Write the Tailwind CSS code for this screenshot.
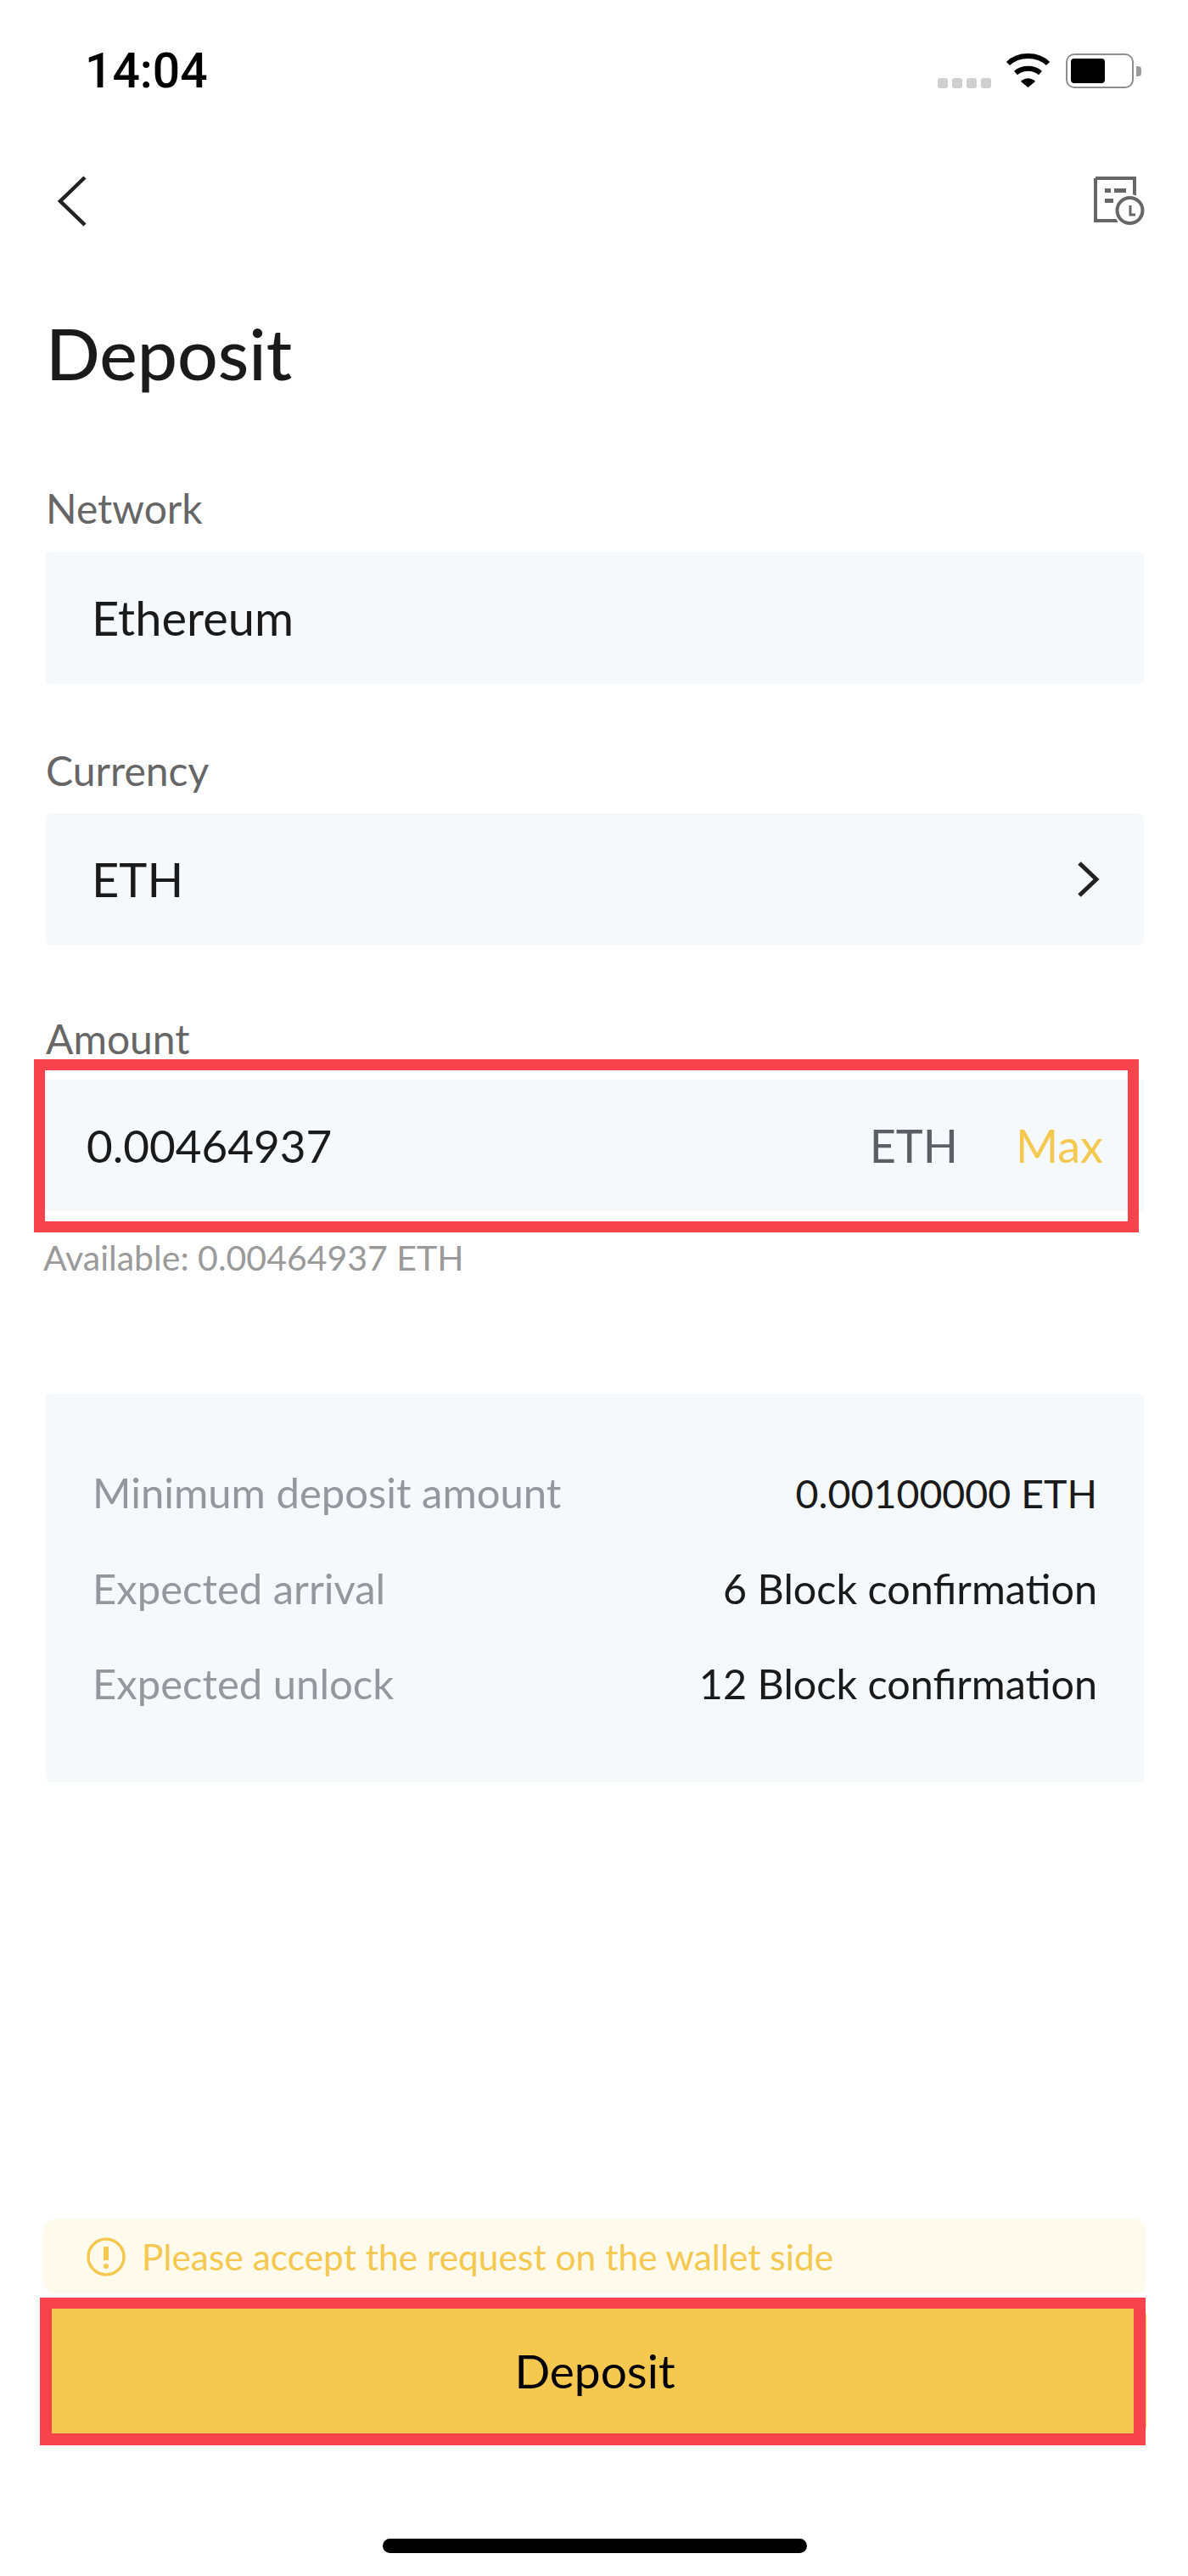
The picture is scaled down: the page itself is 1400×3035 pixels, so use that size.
<!DOCTYPE html>
<html lang="en">
<head>
  <meta charset="UTF-8" />
  <meta name="viewport" content="width=device-width, initial-scale=1" />
  <title>Deposit</title>
  <script src="https://cdn.jsdelivr.net/npm/@tailwindcss/browser@4"></script>
</head>
<body class="bg-white font-['Lato','Liberation_Sans',sans-serif] text-[#1a1a1a]">
  <div class="relative w-[1400px] h-[3035px] overflow-hidden flex flex-col">

    <!-- Status bar -->
    <div class="h-[192px] pl-[100px] pr-[55px] pt-[52px] flex justify-between items-start">
      <span class="font-['Roboto',sans-serif] font-medium text-[57px] leading-[64px] text-black">14:04</span>
      <div class="flex items-start pt-[11px]">
        <div class="flex gap-[5px] mt-[29px] mr-[17px]">
          <span class="w-[12px] h-[12px] rounded-[3px] bg-[#cfcfcf]"></span>
          <span class="w-[12px] h-[12px] rounded-[3px] bg-[#cfcfcf]"></span>
          <span class="w-[12px] h-[12px] rounded-[3px] bg-[#cfcfcf]"></span>
          <span class="w-[12px] h-[12px] rounded-[3px] bg-[#cfcfcf]"></span>
        </div>
        <svg class="w-[53px] h-[40px] mr-[18px]" viewBox="0 0 53 40" fill="none" stroke="black">
          <path d="M3 12 C15 0 38 0 50 12" stroke-width="6" />
          <path d="M12 23 C20 16 33 16 41 23" stroke-width="6" />
          <path d="M18 33 C23 28 30 28 35 33 L26.5 40 Z" fill="black" stroke="none" />
        </svg>
        <div class="w-[80px] h-[41px] rounded-[10px] border-[2px] border-[#8e8e8e] p-[4px]">
          <div class="w-[40px] h-full rounded-[4px] bg-black"></div>
        </div>
        <span class="w-[6px] h-[12px] mt-[15px] ml-[3px] rounded-r-[4px] bg-[#9a9a9a]"></span>
      </div>
    </div>

    <!-- Nav -->
    <div class="h-[90px] pl-[66px] pr-[51px] flex justify-between items-center">
      <svg class="w-[36px] h-[60px]" viewBox="0 0 36 60" fill="none" stroke="#222" stroke-width="4.5">
        <path d="M34 2 L5 30 L34 58" />
      </svg>
      <svg class="w-[60px] h-[60px]" viewBox="0 0 60 60" fill="none">
        <path d="M2 3 H48 V30 M2 3 V53 H28" stroke="#666" stroke-width="4" />
        <rect x="13" y="15" width="7" height="5" fill="#666" />
        <rect x="24" y="15" width="14" height="5" fill="#666" />
        <rect x="13" y="27" width="10" height="5" fill="#666" />
        <circle cx="42.5" cy="41" r="19" fill="white" />
        <circle cx="42.5" cy="41" r="15" stroke="#666" stroke-width="4" />
        <path d="M43 35 V46 H49" stroke="#666" stroke-width="3" />
      </svg>
    </div>

    <!-- Title -->
    <h1 class="mt-[84px] pl-[54px] text-[84px] leading-[100px] font-medium text-[#1a1a1a]">Deposit</h1>

    <!-- Form -->
    <div class="pl-[54px] pr-[52px] mt-[105px] flex flex-col">
      <label class="text-[48px] leading-[56px] text-[#666]">Network</label>
      <div class="mt-[23px] h-[156px] rounded-[6px] bg-[#f5f9fc] pl-[54px] flex items-center text-[56px]">Ethereum</div>

      <label class="mt-[74px] text-[48px] leading-[56px] text-[#666]">Currency</label>
      <div class="mt-[22px] h-[155px] rounded-[6px] bg-[#f5f9fc] pl-[54px] pr-[52px] flex items-center justify-between text-[56px]">
        <span>ETH</span>
        <svg class="w-[28px] h-[44px]" viewBox="0 0 28 44" fill="none" stroke="#222" stroke-width="5">
          <path d="M4 3 L24 22 L4 41" />
        </svg>
      </div>

      <label class="mt-[83px] text-[48px] leading-[56px] text-[#666]">Amount</label>
      <div class="relative mt-[20px] h-[155px] bg-[#f5f9fc] pl-[48px] pr-[48px] flex items-center justify-between text-[54px]">
        <span class="text-[53px]">0.00464937</span>
        <div class="flex items-center gap-[68px]">
          <span class="text-[#5c5f66]">ETH</span>
          <span class="text-[#f5c850]">Max</span>
        </div>
        <div class="absolute left-[-14px] right-[6px] top-[-24px] h-[204px] border-[13px] border-[#f7434c]"></div>
      </div>
      <p class="mt-[32px] -ml-[3px] text-[41px] leading-[46px] text-[#9a9a9a]">Available: 0.00464937 ETH</p>

      <!-- Summary -->
      <div class="mt-[137px] h-[458px] rounded-[6px] bg-[#f5f9fc] pl-[55px] pr-[55px] pt-[88px] flex flex-col gap-[56px] text-[49px] leading-[56px]">
        <div class="flex justify-between items-baseline"><span class="text-[#94979d]">Minimum deposit amount</span><span class="text-[46.5px]">0.00100000 ETH</span></div>
        <div class="flex justify-between items-baseline"><span class="text-[#94979d]">Expected arrival</span><span class="text-[48.5px]">6 Block confirmation</span></div>
        <div class="flex justify-between items-baseline"><span class="text-[#94979d]">Expected unlock</span><span class="text-[48.5px]">12 Block confirmation</span></div>
      </div>
    </div>

    <!-- Footer -->
    <div class="mt-auto pl-[51px] pr-[49px] flex flex-col">
      <div class="h-[89px] rounded-[16px] bg-[#fefaec] pl-[50px] flex items-center gap-[18px] text-[#f5c850] text-[42.5px] leading-[52px]">
        <svg class="w-[48px] h-[48px]" viewBox="0 0 48 48" fill="none" stroke="#f5c850" stroke-width="3.5">
          <circle cx="24" cy="24" r="21" />
          <path d="M24 12 V28" stroke-width="6" />
          <circle cx="24" cy="35" r="3" fill="#f5c850" stroke="none" />
        </svg>
        <span>Please accept the request on the wallet side</span>
      </div>
      <div class="relative h-[159px] mt-[11px] rounded-[16px] bg-[#f5c850] flex items-center justify-center text-[55px] text-black">
        Deposit
        <div class="absolute left-[-4px] right-[1px] top-[-7px] h-[174px] border-x-[14px] border-t-[13px] border-b-[14px] border-[#f7434c]"></div>
      </div>
      <div class="mt-[118px] mb-[27px] mx-auto w-[500px] h-[17px] rounded-full bg-black"></div>
    </div>
  </div>
</body>
</html>
